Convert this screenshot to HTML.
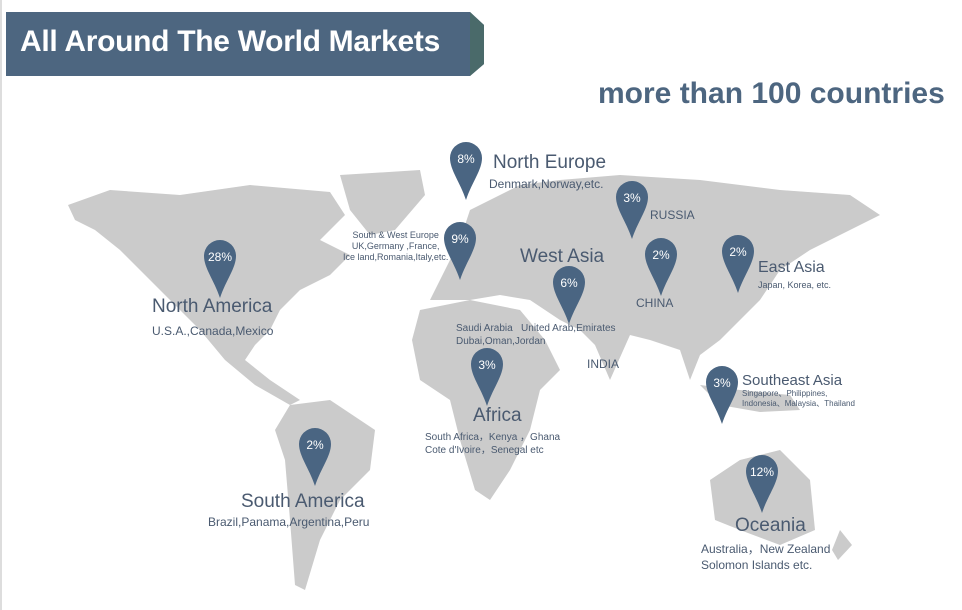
<!DOCTYPE html>
<html><head><meta charset="utf-8"><style>
body{margin:0;width:962px;height:610px;background:#fff;position:relative;overflow:hidden;font-family:"Liberation Sans",sans-serif;color:#4a5a70}
.t{position:absolute;white-space:nowrap}
</style></head><body>
<svg width="962" height="610" style="position:absolute;left:0;top:0">
<rect x="0" y="0" width="2" height="610" fill="#ddd"/>
<polygon points="6,12 470,12 484,25 484,64 470,76 6,76" fill="#4d6680"/>
<polygon points="470,12 484,25 484,64 470,76" fill="#4a6a6a"/>
<g fill="#cbcbcb">
<polygon points="68,205 110,190 180,195 250,185 330,192 345,215 320,240 350,255 330,275 300,290 280,310 270,330 255,345 245,360 270,380 300,400 290,405 255,385 225,360 200,330 170,300 150,280 120,250 95,230 75,220"/>
<polygon points="340,175 420,170 425,195 395,230 370,235 350,210"/>
<polygon points="290,405 330,400 375,430 370,470 340,500 320,540 305,590 295,585 290,520 285,460 275,430"/>
<polygon points="430,300 445,270 460,240 470,210 490,200 520,185 560,180 620,175 700,180 780,190 850,195 880,215 850,230 810,250 780,270 760,300 740,320 720,340 700,355 690,380 680,350 650,340 630,335 610,380 595,345 580,330 560,320 530,300 500,295 470,300"/>
<polygon points="420,310 470,300 520,310 545,340 560,370 540,390 530,430 510,470 490,500 475,490 460,440 450,400 420,380 412,340"/>
<polygon points="700,385 740,390 790,395 800,410 760,412 720,405"/>
<polygon points="710,480 740,460 780,450 810,480 815,530 780,545 740,530 715,520"/>
<polygon points="840,530 852,545 838,560 832,550"/>
</g>
<g fill="#4a6582">
<path d="M466,142a16,16 0 0 1 16,16c0,12 -10,24 -16,42c-6,-18 -16,-30 -16,-42a16,16 0 0 1 16,-16z"/>
<path d="M460,222a16,16 0 0 1 16,16c0,12 -10,24 -16,42c-6,-18 -16,-30 -16,-42a16,16 0 0 1 16,-16z"/>
<path d="M632,181a16,16 0 0 1 16,16c0,12 -10,24 -16,42c-6,-18 -16,-30 -16,-42a16,16 0 0 1 16,-16z"/>
<path d="M661,238a16,16 0 0 1 16,16c0,12 -10,24 -16,42c-6,-18 -16,-30 -16,-42a16,16 0 0 1 16,-16z"/>
<path d="M738,235a16,16 0 0 1 16,16c0,12 -10,24 -16,42c-6,-18 -16,-30 -16,-42a16,16 0 0 1 16,-16z"/>
<path d="M569,266a16,16 0 0 1 16,16c0,12 -10,24 -16,42c-6,-18 -16,-30 -16,-42a16,16 0 0 1 16,-16z"/>
<path d="M220,240a16,16 0 0 1 16,16c0,12 -10,24 -16,42c-6,-18 -16,-30 -16,-42a16,16 0 0 1 16,-16z"/>
<path d="M487,348a16,16 0 0 1 16,16c0,12 -10,24 -16,42c-6,-18 -16,-30 -16,-42a16,16 0 0 1 16,-16z"/>
<path d="M722,366a16,16 0 0 1 16,16c0,12 -10,24 -16,42c-6,-18 -16,-30 -16,-42a16,16 0 0 1 16,-16z"/>
<path d="M315,428a16,16 0 0 1 16,16c0,12 -10,24 -16,42c-6,-18 -16,-30 -16,-42a16,16 0 0 1 16,-16z"/>
<path d="M762,455a16,16 0 0 1 16,16c0,12 -10,24 -16,42c-6,-18 -16,-30 -16,-42a16,16 0 0 1 16,-16z"/>
</g>
<g fill="#fff" font-family="Liberation Sans" font-size="12" text-anchor="middle">
<text x="466" y="163">8%</text><text x="460" y="243">9%</text><text x="632" y="202">3%</text>
<text x="661" y="259">2%</text><text x="738" y="256">2%</text><text x="569" y="287">6%</text>
<text x="220" y="261">28%</text><text x="487" y="369">3%</text><text x="722" y="387">3%</text>
<text x="315" y="449">2%</text><text x="762" y="476">12%</text>
</g>
</svg>
<div class="t" style="left:20px;top:25px;font-size:30px;font-weight:bold;color:#fff;letter-spacing:-0.3px">All Around The World Markets</div>
<div class="t" style="left:598px;top:77px;font-size:30px;font-weight:bold;color:#4d6680">more than 100 countries</div>
<div class="t" style="left:493px;top:152px;font-size:19px">North Europe</div>
<div class="t" style="left:489px;top:177px;font-size:12px">Denmark,Norway,etc.</div>
<div class="t" style="left:650px;top:208px;font-size:12px">RUSSIA</div>
<div class="t" style="left:343px;top:230px;font-size:9px;text-align:center;line-height:11px">South &amp; West Europe<br>UK,Germany ,France,<br>Ice land,Romania,Italy,etc.</div>
<div class="t" style="left:520px;top:246px;font-size:19px">West Asia</div>
<div class="t" style="left:636px;top:296px;font-size:12px">CHINA</div>
<div class="t" style="left:758px;top:259px;font-size:16px">East Asia</div>
<div class="t" style="left:758px;top:280px;font-size:9px">Japan, Korea, etc.</div>
<div class="t" style="left:152px;top:296px;font-size:19px">North America</div>
<div class="t" style="left:152px;top:324px;font-size:12px">U.S.A.,Canada,Mexico</div>
<div class="t" style="left:456px;top:322px;font-size:10px;line-height:13px">Saudi Arabia &nbsp;&nbsp;United Arab,Emirates<br>Dubai,Oman,Jordan</div>
<div class="t" style="left:587px;top:357px;font-size:12px">INDIA</div>
<div class="t" style="left:742px;top:372px;font-size:15px">Southeast Asia</div>
<div class="t" style="left:742px;top:389px;font-size:8px;line-height:10px">Singapore、Philippines,<br>Indonesia、Malaysia、Thailand</div>
<div class="t" style="left:473px;top:405px;font-size:19px">Africa</div>
<div class="t" style="left:425px;top:431px;font-size:10px;line-height:13px">South Africa，Kenya ，Ghana<br>Cote d'Ivoire，Senegal etc</div>
<div class="t" style="left:241px;top:491px;font-size:19px">South America</div>
<div class="t" style="left:208px;top:515px;font-size:12px">Brazil,Panama,Argentina,Peru</div>
<div class="t" style="left:735px;top:515px;font-size:19px">Oceania</div>
<div class="t" style="left:701px;top:541px;font-size:12px;line-height:16px">Australia，New Zealand<br>Solomon Islands etc.</div>
</body></html>
